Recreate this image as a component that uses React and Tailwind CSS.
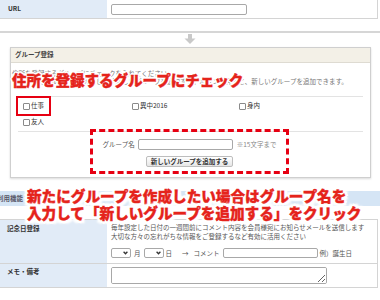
import React from "react";

const CALLOUT_SHADOW =
  "[text-shadow:3px_0_0_#fff,-3px_0_0_#fff,0_3px_0_#fff,0_-3px_0_#fff,2px_2px_0_#fff,-2px_2px_0_#fff,2px_-2px_0_#fff,-2px_-2px_0_#fff,3px_3px_2px_#fff,-3px_-3px_2px_#fff,3px_-3px_2px_#fff,-3px_3px_2px_#fff]";

function Check({ label, marked }) {
  return (
    <label
      className={
        marked
          ? "justify-self-start flex items-center gap-[1px] text-[6.5px] text-[#333] border-2 border-[#e60012] -mx-[7px] px-[5px] -my-[5px] py-[3px] h-[20px]"
          : "justify-self-start flex items-center gap-[1px] text-[6.5px] text-[#333] h-[10px]"
      }
    >
      <span className="w-[7px] h-[7px] border border-[#8a8a8a] bg-white rounded-[1px]" />
      {label}
    </label>
  );
}

function Select() {
  return (
    <span className="flex items-center justify-end w-[20px] h-[10px] border border-[#a8a8a8] rounded-[2px] bg-white pr-[2px]">
      <svg width="5" height="4" viewBox="0 0 5 4">
        <path d="M0.6 0.8 L2.5 2.8 L4.4 0.8" fill="none" stroke="#333" strokeWidth="1.3" />
      </svg>
    </span>
  );
}

export default function App() {
  return (
    <div className="relative w-[380px] h-[300px] overflow-hidden bg-white [font-family:'Noto_Sans_CJK_JP','Noto_Sans',sans-serif]">
      {/* URL */}
      <div className="flex h-[19px] w-[378px] border-b border-r border-[#d4d4d4]">
        <div className="w-[107px] bg-[#e1ebf7] flex items-center pl-[8px] text-[6.5px] font-bold text-[#333]">URL</div>
        <div className="flex items-center pl-[4px]">
          <input className="w-[136px] h-[11px] border border-[#a8a8a8] rounded-[2px] bg-white" />
        </div>
      </div>

      <div className="mt-[12px] h-[2px] bg-[#d6d6d6]" />
      <div className="flex justify-center mt-[1px]">
        <svg width="12" height="10" viewBox="0 0 12 10">
          <rect x="4" y="0" width="4" height="5" fill="#c9c9c9" />
          <path d="M0.5 4.5 L11.5 4.5 L6 10 Z" fill="#c9c9c9" />
        </svg>
      </div>

      {/* グループ登録 */}
      <div className="mt-[3px] ml-[10px] w-[361px] border border-[#cfcfcf] shadow-[0_1px_2px_rgba(0,0,0,0.15)]">
        <div className="h-[15px] bg-[#f3f0e7] border-b border-[#dedbd2] flex items-center pl-[4px] text-[6.5px] font-bold text-[#444]">
          グループ登録
        </div>
        <div className="pt-[6px] pb-[11px] pl-[1px] text-[6.5px] leading-[8px] text-[#777] whitespace-nowrap">
          <div>住所を登録するグループにチェックを入れてください。</div>
          <div>下記の欄にグループ名を入力して「新しいグループを追加する」ボタンを押すと、新しいグループを追加できます。</div>
        </div>
        <div className="mx-[7px] border-t border-[#e3e3e3]" />
        <div className="grid grid-cols-[109px_107px_109px] gap-y-[6px] pl-[12px] pt-[4px]">
          <Check label="仕事" marked />
          <Check label="異中2016" />
          <Check label="身内" />
          <Check label="友人" />
        </div>
        <div className="mt-[4px] mx-[7px] border-t border-[#e3e3e3]" />
        <div className="-mt-[3px] ml-[79px] w-[199px] h-[45px] border-[3px] border-dashed border-[#e60012] flex flex-col items-center pt-[7px]">
          <div className="flex items-center h-[11px] text-[6.5px] text-[#555]">
            <span>グループ名</span>
            <input className="ml-[3px] w-[95px] h-[11px] border border-[#a8a8a8] rounded-[2px] bg-white" />
            <span className="ml-[4px] text-[#888]">※15文字まで</span>
          </div>
          <button className="mt-[6px] h-[11px] px-[4px] border border-[#bdbdbd] rounded-[2px] bg-gradient-to-b from-white to-[#e6e6e6] text-[6.5px] font-bold text-[#333] leading-none">
            新しいグループを追加する
          </button>
        </div>
        <div className="h-[3px]" />
      </div>

      {/* 利用機能 */}
      <div className="mt-[13px] h-[15px] bg-[#d5e5f5] flex items-center">
        <span className="-ml-[3px] text-[6.5px] font-bold text-[#556]">利用機能</span>
      </div>

      <div className="mt-[13px] w-[378px] border-t border-r border-[#d4d4d4]">
        <div className="flex border-b border-[#d4d4d4]">
          <div className="w-[107px] shrink-0 bg-[#e1ebf7] pl-[7px] pt-[4px] text-[6.5px] font-bold text-[#333]">記念日登録</div>
          <div className="pl-[4px] pt-[3px] pb-[5px] text-[6.5px] leading-[9px] text-[#555] whitespace-nowrap">
            <div>毎年設定した日付の一週間前にコメント内容を会員様宛にお知らせメールを送信します</div>
            <div>大切な方々の忘れがちな情報をご登録するなど有効に活用ください</div>
            <div className="mt-[7px] flex items-center h-[10px]">
              <Select />
              <span className="ml-[3px]">月</span>
              <span className="ml-[3px]"><Select /></span>
              <span className="ml-[2px]">日</span>
              <span className="ml-[10px]">→</span>
              <span className="ml-[5px]">コメント</span>
              <input className="ml-[3px] w-[95px] h-[10px] border border-[#a8a8a8] rounded-[2px] bg-white" />
              <span className="ml-[2px]">例）誕生日</span>
            </div>
          </div>
        </div>
        <div className="flex border-b border-[#d4d4d4]">
          <div className="w-[107px] shrink-0 bg-[#e1ebf7] pl-[7px] pt-[3px] text-[6.5px] font-bold text-[#333]">メモ・備考</div>
          <div className="pl-[4px] py-[3px]">
            <textarea className="block w-[216px] h-[17px] border border-[#a8a8a8] rounded-[2px] bg-white" />
          </div>
        </div>
      </div>

      {/* callouts */}
      <div className="absolute left-[12px] top-[72px] text-[14.5px] leading-[15px] font-black text-[#e5231b] whitespace-nowrap [-webkit-text-stroke:0.4px_#e5231b] [text-shadow:2px_0_0_#fff,-2px_0_0_#fff,0_2px_0_#fff,0_-2px_0_#fff,1px_1px_0_#fff,-1px_-1px_0_#fff,1px_-1px_0_#fff,-1px_1px_0_#fff]">
        住所を登録するグループにチェック
      </div>
      <div className={"absolute left-[27px] top-[187px] text-[14.6px] leading-[17px] font-black text-[#e5231b] whitespace-nowrap [-webkit-text-stroke:0.4px_#e5231b] " + CALLOUT_SHADOW}>
        <div>新たにグループを作成したい場合はグループ名を</div>
        <div>入力して「新しいグループを追加する」をクリック</div>
      </div>
    </div>
  );
}
